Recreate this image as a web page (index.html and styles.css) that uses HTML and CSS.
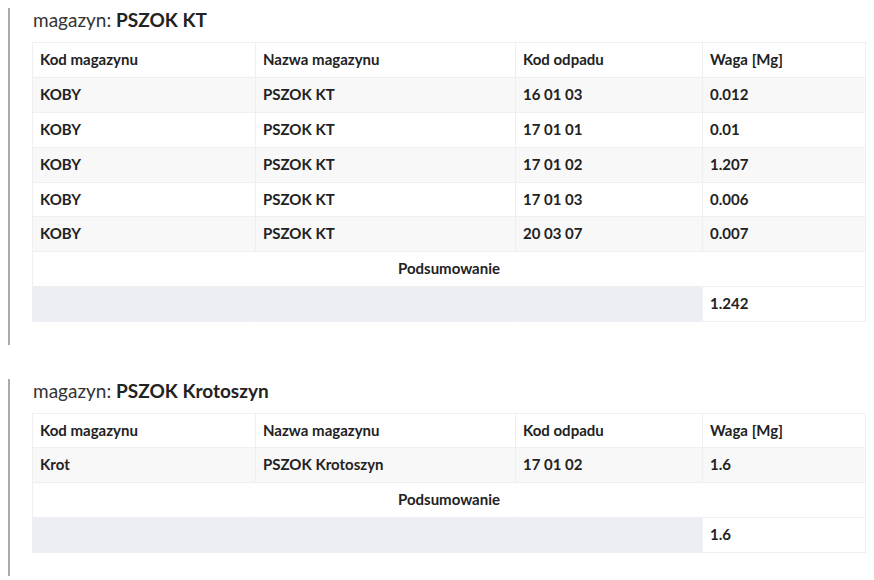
FILE: index.html
```html
<!DOCTYPE html>
<html lang="pl">
<head>
<meta charset="utf-8">
<title>Magazyny</title>
<link rel="stylesheet" href="styles.css">
</head>
<body>
<section class="block">
  <h2 class="title">magazyn: <b>PSZOK KT</b></h2>
  <table class="tbl">
    <colgroup><col class="c1"><col class="c2"><col class="c3"><col class="c4"></colgroup>
    <thead>
      <tr><th>Kod magazynu</th><th>Nazwa magazynu</th><th>Kod odpadu</th><th>Waga [Mg]</th></tr>
    </thead>
    <tbody>
      <tr class="odd"><td>KOBY</td><td>PSZOK KT</td><td>16 01 03</td><td>0.012</td></tr>
      <tr><td>KOBY</td><td>PSZOK KT</td><td>17 01 01</td><td>0.01</td></tr>
      <tr class="odd"><td>KOBY</td><td>PSZOK KT</td><td>17 01 02</td><td>1.207</td></tr>
      <tr><td>KOBY</td><td>PSZOK KT</td><td>17 01 03</td><td>0.006</td></tr>
      <tr class="odd"><td>KOBY</td><td>PSZOK KT</td><td>20 03 07</td><td>0.007</td></tr>
      <tr><td colspan="4" class="summary">Podsumowanie</td></tr>
      <tr class="total"><td class="empty"></td><td class="empty"></td><td class="empty"></td><td>1.242</td></tr>
    </tbody>
  </table>
</section>
<section class="block">
  <h2 class="title">magazyn: <b>PSZOK Krotoszyn</b></h2>
  <table class="tbl">
    <colgroup><col class="c1"><col class="c2"><col class="c3"><col class="c4"></colgroup>
    <thead>
      <tr><th>Kod magazynu</th><th>Nazwa magazynu</th><th>Kod odpadu</th><th>Waga [Mg]</th></tr>
    </thead>
    <tbody>
      <tr class="odd"><td>Krot</td><td>PSZOK Krotoszyn</td><td>17 01 02</td><td>1.6</td></tr>
      <tr><td colspan="4" class="summary">Podsumowanie</td></tr>
      <tr class="total"><td class="empty"></td><td class="empty"></td><td class="empty"></td><td>1.6</td></tr>
    </tbody>
  </table>
</section>
</body>
</html>
```
FILE: styles.css
```css
html, body {
  margin: 0;
  padding: 0;
  background: #fff;
}
body {
  padding: 8px 8px 0 8px;
  font-family: Lato, "Open Sans", "Liberation Sans", sans-serif;
  color: #222;
}
.block {
  border-left: 2px solid #aaaaaa;
  padding: 0 0 22.5px 22px;
  margin-bottom: 34px;
}
.title {
  margin: 0 0 10px 1px;
  font-size: 19px;
  line-height: 24px;
  font-weight: 400;
  color: #333;
}
.title b {
  font-weight: 700;
  color: #222;
}
.tbl {
  width: 100%;
  border-collapse: collapse;
  table-layout: fixed;
  font-size: 15px;
  font-weight: 700;
}
.c1 { width: 223px; }
.c2 { width: 260px; }
.c3 { width: 187px; }
.c4 { width: auto; }
.tbl th, .tbl td {
  border: 1px solid #efefef;
  padding: 8px 7px;
  line-height: 17.875px;
  text-align: left;
  vertical-align: middle;
  color: #222;
}
.tbl tr.odd td {
  background: #f8f8f8;
}
.tbl td.summary {
  text-align: center;
}
.tbl td.empty {
  background: #ebeef2;
  border-color: #eef0f3;
}
```
